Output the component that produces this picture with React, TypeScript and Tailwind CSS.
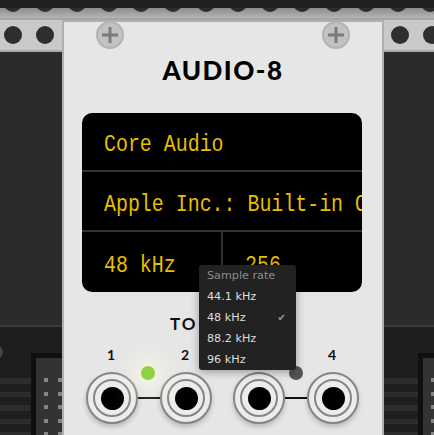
import React from 'react';

const SANS = "font-['DejaVu_Sans',sans-serif]";
const HOLES = [0, 1, 2, 3, 4, 5, 6, 7, 8, 9, 10, 11, 12, 13];
const RATES = ['44.1 kHz', '48 kHz', '88.2 kHz', '96 kHz'];
const GRID_ROWS = [0, 1, 2, 3, 4];

const Hole = () => <div className="w-[18px] h-[18px] rounded-full bg-[#2e2e2e] shrink-0" />;

const Screw = () => (
    <div className="w-[28px] h-[28px] rounded-full bg-[#c2c2c2] border-2 border-[#b4b4b4] flex items-center justify-center">
        <svg width="20" height="20" viewBox="0 0 20 20">
            <path d="M10 2v16M2 10h16" stroke="#7a7a7a" strokeWidth="3" />
        </svg>
    </div>
);

const Port = () => (
    <div className="w-[52px] h-[52px] rounded-full border-2 border-[#858585] bg-[#ececec] flex items-center justify-center shrink-0 shadow-[0_3px_5px_rgba(0,0,0,0.2)]">
        <div className="w-[38px] h-[38px] rounded-full border-2 border-[#858585] flex items-center justify-center">
            <div className="w-[23px] h-[23px] rounded-full bg-black" />
        </div>
    </div>
);

const Link = () => <div className="w-[22px] h-[2px] bg-[#111] shrink-0" />;

const GridDots = () => (
    <div className="flex flex-col gap-[9.6px] pt-[20px] pl-[8px]">
        {GRID_ROWS.map((row) => (
            <div key={row} className="flex gap-[10px]">
                <div className="w-[4px] h-[4px] bg-[#858585] shrink-0" />
                <div className="w-[4px] h-[4px] bg-[#858585] shrink-0" />
            </div>
        ))}
    </div>
);

const Stripes = () => (
    <div className="flex flex-col gap-[8px] pt-[25px]">
        {GRID_ROWS.map((row) => (
            <div key={row} className="h-[5.6px] bg-[#2c2c2c]" />
        ))}
    </div>
);

const SideModule: React.FC<{ side: 'left' | 'right' }> = ({ side }) => {
    const isLeft = side === 'left';
    return (
        <div className={`relative flex flex-col h-full overflow-hidden shrink-0 ${isLeft ? 'w-[62px]' : 'w-[50px]'}`}>
            <div className={`h-[32px] shrink-0 bg-[#c9c9c9] border-b-2 border-[#a9a9a9] flex items-center gap-[14px] ${isLeft ? 'pl-[4px]' : 'pl-[7px]'}`}>
                <Hole />
                <Hole />
            </div>
            <div className="h-[273px] shrink-0 bg-[#2b2b2b]" />
            <div className="h-[2px] shrink-0 bg-[#3a3a3a]" />
            <div className="flex-1 bg-[#1e1e1e] flex pt-[26px]">
                <div className={`shrink-0 ${isLeft ? 'w-[31px]' : 'w-[34px]'}`}><Stripes /></div>
                <div className="flex-1 bg-[#333] border-l-[5px] border-t-[5px] border-[#0f0f0f]"><GridDots /></div>
            </div>
            {/* knob of the module on the left, mostly off screen */}
            {isLeft && <div className="absolute -left-[11px] top-[325px] w-[14px] h-[14px] rounded-full bg-[#444]" />}
        </div>
    );
};

const SampleRateMenu = () => (
    <div className={`absolute left-[135px] top-[243px] w-[97px] h-[105px] z-10 bg-[#222] rounded-[3px] pt-[3px] text-[11.2px] leading-[21px] shadow-[0_2px_10px_rgba(0,0,0,0.35)] ${SANS}`}>
        <div className="px-[8px] h-[18px] leading-[15px] text-[#8c8c8c]">Sample rate</div>
        {RATES.map((rate) => (
            <div key={rate} className="px-[8px] flex justify-between items-center text-[#dedede]">
                <span>{rate}</span>
                {rate === '48 kHz' && <span className="text-[#9a9a9a] text-[10px] pr-[2px]">✔</span>}
            </div>
        ))}
    </div>
);

const LcdText: React.FC<{ children: React.ReactNode }> = ({ children }) => (
    <span className="inline-block origin-left scale-x-[0.83] pt-[7px]">{children}</span>
);

const Display = () => (
    <div className="w-[280px] h-[179px] bg-black rounded-[10px] overflow-hidden flex flex-col text-[#e6bf00] font-['Liberation_Mono',monospace] text-[24px] whitespace-nowrap">
        <div className="h-[59px] pl-[22px] flex items-center border-b-2 border-[#333]"><LcdText>Core Audio</LcdText></div>
        <div className="h-[60px] pl-[22px] flex items-center border-b-2 border-[#333] overflow-hidden"><LcdText>Apple Inc.: Built-in Output</LcdText></div>
        <div className="flex-1 flex">
            <div className="w-[141px] pl-[22px] flex items-center border-r-2 border-[#333]"><LcdText>48 kHz</LcdText></div>
            <div className="flex-1 pl-[22px] flex items-center"><LcdText>256</LcdText></div>
        </div>
    </div>
);

const AudioPanel = () => (
    <div className="relative w-[322px] h-full shrink-0 bg-[#e6e6e6] border-x-2 border-t-2 border-[#b0b0b0]">
        <div className="flex justify-between pl-[32px] pr-[32px] -mt-[1px]">
            <Screw />
            <Screw />
        </div>
        <div className="mt-[4px] h-[34px] flex items-center justify-center text-black font-['Lato',sans-serif] font-black text-[26px] tracking-[1.5px]">
            AUDIO-8
        </div>
        <div className="mt-[26px] pl-[18px]">
            <Display />
        </div>
        <div className="mt-[22px] h-[20px] leading-[20px] text-center text-[#111] font-['Lato',sans-serif] font-bold text-[17px] tracking-[2px]">
            TO DEVICE
        </div>
        <div className="mt-[10px] h-[20px] pl-[21px] flex text-[14px] text-[#111] font-['Lato',sans-serif] font-bold">
            <div className="w-[52px] text-center">1</div>
            <div className="w-[22px]" />
            <div className="w-[52px] text-center">2</div>
            <div className="w-[21px]" />
            <div className="w-[52px] text-center">3</div>
            <div className="w-[22px]" />
            <div className="w-[52px] text-center">4</div>
        </div>
        <div className="mt-[8px] pl-[22px] flex items-center">
            <Port />
            <Link />
            <Port />
            <div className="w-[21px] shrink-0" />
            <Port />
            <Link />
            <Port />
        </div>
        {/* status leds sit over the port row */}
        <div className="absolute left-[77px] top-[344px] w-[14px] h-[14px] rounded-full bg-[#8fd13f] shadow-[0_0_22px_10px_rgba(255,255,230,0.6)]" />
        <div className="absolute left-[225px] top-[344px] w-[14px] h-[14px] rounded-full bg-[#545454]" />
        <SampleRateMenu />
    </div>
);

export default function App() {
    return (
        <div className="w-[434px] h-[435px] overflow-hidden flex flex-col bg-[#212121]">
            <div className="h-[8px] bg-[#212121] shrink-0" />
            <div className="relative h-[12px] shrink-0 bg-gradient-to-b from-[#8c8c8c] to-[#b5b5b5] border-b-2 border-[#a5a5a5] overflow-hidden">
                <div className="absolute left-[4px] -top-[14px] flex gap-[14.1px]">
                    {HOLES.map((i) => <Hole key={i} />)}
                </div>
            </div>
            <div className="flex-1 flex min-h-0">
                <SideModule side="left" />
                <AudioPanel />
                <SideModule side="right" />
            </div>
        </div>
    );
}
